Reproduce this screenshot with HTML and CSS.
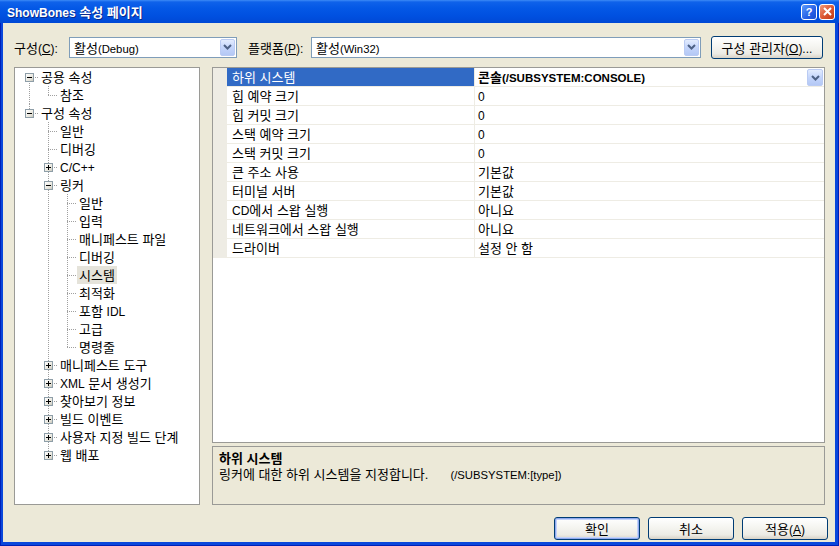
FILE: index.html
```html
<!DOCTYPE html>
<html lang="ko">
<head>
<meta charset="utf-8">
<title>ShowBones 속성 페이지</title>
<link rel="stylesheet" href="styles.css">
</head>
<body>
<div class="window">
  <div class="titlebar">
    <span class="title"><span class="l">ShowBones</span> 속성 페이지</span>
    <div class="caption-btns">
      <span class="cbtn help">?</span>
      <span class="cbtn close"><svg width="9" height="9" viewBox="0 0 9 9"><path d="M1 1 L8 8 M8 1 L1 8" stroke="#fff" stroke-width="2" fill="none"/></svg></span>
    </div>
  </div>
  <div class="client">
    <div class="toolbar">
      <span class="lbl lbl-config">구성<span class="l">(<u>C</u>):</span></span>
      <div class="combo combo-config">
        <span class="combo-text">활성<span class="t">(Debug)</span></span>
        <span class="dd"><svg width="9" height="6" viewBox="0 0 9 6"><path d="M1 1 L4.5 4.5 L8 1" stroke="#4D6185" stroke-width="2" fill="none"/></svg></span>
      </div>
      <span class="lbl lbl-platform">플랫폼<span class="l">(<u>P</u>):</span></span>
      <div class="combo combo-platform">
        <span class="combo-text">활성<span class="t">(Win32)</span></span>
        <span class="dd"><svg width="9" height="6" viewBox="0 0 9 6"><path d="M1 1 L4.5 4.5 L8 1" stroke="#4D6185" stroke-width="2" fill="none"/></svg></span>
      </div>
      <button class="btn btn-cfgmgr">구성 관리자<span class="l">(<u>O</u>)...</span></button>
    </div>

    <div class="main">
      <div class="tree-panel">
        <ul class="tree">
          <li class="first-root"><div class="row"><span class="exp minus"></span><span class="lbl-t">공용 속성</span></div>
            <ul>
              <li class="last"><div class="row"><span class="sp"></span><span class="lbl-t">참조</span></div></li>
            </ul>
          </li>
          <li class="last"><div class="row"><span class="exp minus"></span><span class="lbl-t">구성 속성</span></div>
            <ul>
              <li><div class="row"><span class="sp"></span><span class="lbl-t">일반</span></div></li>
              <li><div class="row"><span class="sp"></span><span class="lbl-t">디버깅</span></div></li>
              <li><div class="row"><span class="exp plus"></span><span class="lbl-t"><span class="l">C/C++</span></span></div></li>
              <li><div class="row"><span class="exp minus"></span><span class="lbl-t">링커</span></div>
                <ul>
                  <li><div class="row"><span class="sp"></span><span class="lbl-t">일반</span></div></li>
                  <li><div class="row"><span class="sp"></span><span class="lbl-t">입력</span></div></li>
                  <li><div class="row"><span class="sp"></span><span class="lbl-t">매니페스트 파일</span></div></li>
                  <li><div class="row"><span class="sp"></span><span class="lbl-t">디버깅</span></div></li>
                  <li><div class="row"><span class="sp"></span><span class="lbl-t selected">시스템</span></div></li>
                  <li><div class="row"><span class="sp"></span><span class="lbl-t">최적화</span></div></li>
                  <li><div class="row"><span class="sp"></span><span class="lbl-t">포함 <span class="l">IDL</span></span></div></li>
                  <li><div class="row"><span class="sp"></span><span class="lbl-t">고급</span></div></li>
                  <li class="last"><div class="row"><span class="sp"></span><span class="lbl-t">명령줄</span></div></li>
                </ul>
              </li>
              <li><div class="row"><span class="exp plus"></span><span class="lbl-t">매니페스트 도구</span></div></li>
              <li><div class="row"><span class="exp plus"></span><span class="lbl-t"><span class="l">XML</span> 문서 생성기</span></div></li>
              <li><div class="row"><span class="exp plus"></span><span class="lbl-t">찾아보기 정보</span></div></li>
              <li><div class="row"><span class="exp plus"></span><span class="lbl-t">빌드 이벤트</span></div></li>
              <li><div class="row"><span class="exp plus"></span><span class="lbl-t">사용자 지정 빌드 단계</span></div></li>
              <li class="last"><div class="row"><span class="exp plus"></span><span class="lbl-t">웹 배포</span></div></li>
            </ul>
          </li>
        </ul>
      </div>

      <div class="right">
        <div class="grid">
          <div class="prows">
            <div class="prow sel">
              <div class="pname">하위 시스템</div>
              <div class="pval"><b class="val-bold">콘솔<span class="tb">(/SUBSYSTEM:CONSOLE)</span></b>
                <span class="dd dd-grid"><svg width="9" height="6" viewBox="0 0 9 6"><path d="M1 1 L4.5 4.5 L8 1" stroke="#4D6185" stroke-width="2" fill="none"/></svg></span>
              </div>
            </div>
            <div class="prow"><div class="pname">힙 예약 크기</div><div class="pval"><span class="l">0</span></div></div>
            <div class="prow"><div class="pname">힙 커밋 크기</div><div class="pval"><span class="l">0</span></div></div>
            <div class="prow"><div class="pname">스택 예약 크기</div><div class="pval"><span class="l">0</span></div></div>
            <div class="prow"><div class="pname">스택 커밋 크기</div><div class="pval"><span class="l">0</span></div></div>
            <div class="prow"><div class="pname">큰 주소 사용</div><div class="pval">기본값</div></div>
            <div class="prow"><div class="pname">터미널 서버</div><div class="pval">기본값</div></div>
            <div class="prow"><div class="pname"><span class="l">CD</span>에서 스왑 실행</div><div class="pval">아니요</div></div>
            <div class="prow"><div class="pname">네트워크에서 스왑 실행</div><div class="pval">아니요</div></div>
            <div class="prow"><div class="pname">드라이버</div><div class="pval">설정 안 함</div></div>
          </div>
        </div>
        <div class="desc">
          <div class="desc-title">하위 시스템</div>
          <div class="desc-text">링커에 대한 하위 시스템을 지정합니다.<span class="t desc-switch">(/SUBSYSTEM:[type])</span></div>
        </div>
      </div>
    </div>

    <div class="buttons">
      <button class="btn btn-dlg default">확인</button>
      <button class="btn btn-dlg">취소</button>
      <button class="btn btn-dlg">적용<span class="l">(<u>A</u>)</span></button>
    </div>
  </div>
</div>
</body>
</html>
```

FILE: styles.css
```css
* { box-sizing: border-box; }
html, body { margin: 0; padding: 0; }
body {
  width: 839px;
  height: 546px;
  overflow: hidden;
  font-family: "Liberation Sans", "Noto Sans CJK KR", sans-serif;
  font-size: 13px;
  color: #000;
}
ul { list-style: none; margin: 0; padding: 0; }
u { text-decoration: underline; }

/* Latin runs are set smaller than the Hangul runs */
.l { font-size: 12px; }
.t { font-size: 11.3px; }
.tb { font-size: 11.5px; }

.window {
  width: 839px;
  height: 546px;
  display: flex;
  flex-direction: column;
  background: #0A47DB;
  box-shadow: inset 1px 0 #0020B8, inset -1px 0 #0020B8, inset 0 -1px #0020B8;
}

/* Title bar */
.titlebar {
  height: 23px;
  flex: none;
  display: flex;
  align-items: center;
  padding: 0 4px 0 7px;
  background: linear-gradient(to bottom, #3D8BF6 0, #0F62EA 2px, #0458E6 8px, #0050E0 16px, #0048D5 100%);
  color: #fff;
}
.title {
  font-weight: bold;
  font-size: 13px;
  text-shadow: 1px 1px 0 #0A2A8C;
}
.caption-btns {
  margin-left: auto;
  display: flex;
  gap: 2px;
}
.cbtn {
  width: 16px;
  height: 16px;
  border: 1px solid #fff;
  border-radius: 3px;
  display: flex;
  align-items: center;
  justify-content: center;
  color: #fff;
  font-weight: bold;
  font-size: 11px;
}
.help { background: linear-gradient(135deg, #5C9CFC, #2660E6 60%, #1B4FD0); }
.close { background: linear-gradient(135deg, #F09A7C, #DA5530 55%, #C23A16); }

/* Client area */
.client {
  flex: 1;
  margin: 0 4px 4px 3px;
  background: #ECE9D8;
  display: flex;
  flex-direction: column;
}

/* Toolbar */
.toolbar {
  margin-top: 13px;
  height: 22px;
  padding: 0 12px 0 11px;
  display: flex;
  align-items: center;
}
.lbl { white-space: nowrap; }
.lbl-config { width: 55px; }
.lbl-platform { width: 63px; margin-left: 11px; }
.combo {
  height: 21px;
  border: 1px solid #7F9DB9;
  background: #fff;
  display: flex;
  align-items: center;
}
.combo-config { width: 168px; }
.combo-platform { flex: 1; }
.combo-text { flex: 1; padding-left: 4px; white-space: nowrap; }
.dd {
  width: 15px;
  height: 17px;
  margin: 1px;
  border: 1px solid #BACBF3;
  border-radius: 2px;
  background: linear-gradient(to bottom, #E3ECFE, #C4D5FB 50%, #B4C8F5);
  display: flex;
  align-items: center;
  justify-content: center;
  flex: none;
}

.btn {
  font-family: "Liberation Sans", "Noto Sans CJK KR", sans-serif;
  font-size: 13px;
  color: #000;
  height: 23px;
  padding: 0;
  border: 1px solid #003C74;
  border-radius: 3px;
  background: linear-gradient(to bottom, #FFFFFF 0, #F6F6F2 40%, #ECEBE5 80%, #D8D2C6 100%);
  white-space: nowrap;
}
.btn-cfgmgr { width: 112px; margin-left: 10px; }

/* Main */
.main {
  margin-top: 9px;
  height: 438px;
  padding: 0 10px 0 11px;
  display: flex;
  gap: 12px;
}

.tree-panel {
  width: 186px;
  flex: none;
  border: 1px solid #9A9A96;
  background: #fff;
}
.tree { padding-left: 10px; }
.tree ul { padding-left: 19px; }
.tree li { position: relative; }
.tree li::before {
  content: "";
  position: absolute;
  left: 4px;
  top: 0;
  bottom: 0;
  width: 1px;
  background: repeating-linear-gradient(to bottom, #A0A0A0 0 1px, transparent 1px 2px);
}
.tree li.last::before { bottom: auto; height: 10px; }
.tree li.first-root::before { top: 9px; }
.row {
  position: relative;
  height: 18px;
  display: flex;
  align-items: flex-start;
}
.row::before {
  content: "";
  position: absolute;
  left: 4px;
  top: 9px;
  width: 10px;
  height: 1px;
  background: repeating-linear-gradient(to right, #A0A0A0 0 1px, transparent 1px 2px);
}
.sp { width: 14px; flex: none; }
.exp {
  position: relative;
  z-index: 1;
  margin-top: 5px;
  margin-right: 5px;
  width: 9px;
  height: 9px;
  flex: none;
  border: 1px solid #8E9EA8;
  background: linear-gradient(135deg, #FFFFFF, #E6E4DA 70%, #C8C6BC);
}
.exp::before {
  content: "";
  position: absolute;
  left: 1px;
  top: 3px;
  width: 5px;
  height: 1px;
  background: #000;
}
.exp.plus::after {
  content: "";
  position: absolute;
  left: 3px;
  top: 1px;
  width: 1px;
  height: 5px;
  background: #000;
}
.lbl-t {
  position: relative;
  z-index: 1;
  height: 18px;
  padding: 2px 2px 0 2px;
  line-height: 16px;
  white-space: nowrap;
}
.lbl-t.selected { background: #E5E3DA; }

/* Right side */
.right {
  flex: 1;
  display: flex;
  flex-direction: column;
  gap: 3px;
}
.grid {
  height: 376px;
  flex: none;
  border: 1px solid #9A9A96;
  background: #fff;
}
.prows {
  background: #EEECE4;
  padding: 0 0 1px 14px;
  display: flex;
  flex-direction: column;
  gap: 1px;
}
.prow {
  height: 18px;
  display: flex;
  gap: 1px;
}
.pname {
  width: 247px;
  flex: none;
  background: #fff;
  padding: 2px 0 0 5px;
  line-height: 16px;
  white-space: nowrap;
}
.pval {
  flex: 1;
  background: #fff;
  padding: 2px 0 0 3px;
  line-height: 16px;
  display: flex;
  align-items: flex-start;
  white-space: nowrap;
}
.prow.sel .pname { background: #316AC5; color: #fff; }
.val-bold { flex: 1; font-weight: bold; }
.dd-grid { width: 16px; height: 17px; margin: -1px 1px 0 0; }

.desc {
  flex: 1;
  border: 1px solid #9A9A96;
  background: #ECE9D8;
  padding: 4px 6px 0 6px;
  line-height: 16px;
}
.desc-title { font-weight: bold; }
.desc-switch { margin-left: 22px; }

/* Bottom buttons */
.buttons {
  margin-top: 12px;
  height: 23px;
  padding-right: 7px;
  display: flex;
  justify-content: flex-end;
  gap: 8px;
}
.btn-dlg { width: 86px; }
.btn.default {
  box-shadow: inset 0 0 0 1px #8FA9EE, inset 0 0 0 2px #C3D3FA;
}
```
